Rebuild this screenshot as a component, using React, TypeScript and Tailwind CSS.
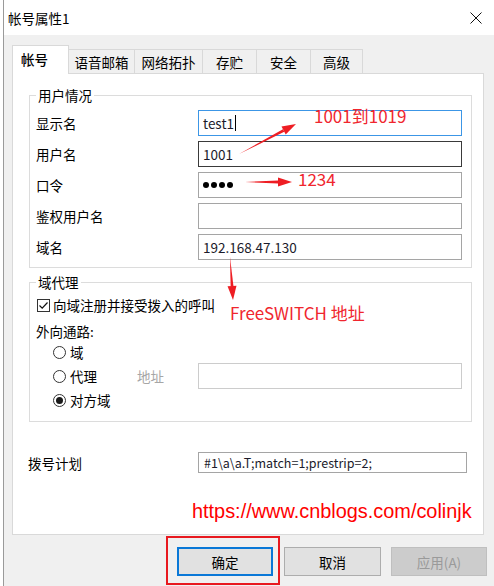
const inputClass = "h-[26px] border border-[#a5a5a5] bg-white pl-[4px] flex items-center text-[#1b1b2b]";

const tabs = [
  { label: "语音邮箱", w: "w-[66px]" },
  { label: "网络拓扑", w: "w-[68px]" },
  { label: "存贮", w: "w-[54px]" },
  { label: "安全", w: "w-[54px]" },
  { label: "高级", w: "w-[52px]" },
];

function Radio({ checked }: { checked?: boolean }) {
  return (
    <span className="flex h-[13px] w-[13px] items-center justify-center rounded-full border border-[#333] bg-white">
      {checked && <span className="h-[7px] w-[7px] rounded-full bg-[#1a1a1a]" />}
    </span>
  );
}

function Arrow({ x1, y1, x2, y2 }: { x1: number; y1: number; x2: number; y2: number }) {
  const dx = x2 - x1;
  const dy = y2 - y1;
  const len = Math.hypot(dx, dy);
  const ux = dx / len;
  const uy = dy / len;
  const bx = x2 - ux * 14;
  const by = y2 - uy * 14;
  const nx = -uy;
  const ny = ux;
  return (
    <g fill="#ee1d23" stroke="none">
      <polygon
        points={`${x1},${y1} ${bx + nx * 1.4},${by + ny * 1.4} ${bx - nx * 1.4},${by - ny * 1.4}`}
      />
      <polygon
        points={`${x2},${y2} ${bx + nx * 4.5},${by + ny * 4.5} ${bx - nx * 4.5},${by - ny * 4.5}`}
      />
    </g>
  );
}

export default function App() {
  return (
    <div className="relative flex h-[586px] w-[494px] overflow-hidden bg-[#f0f0f0] font-['Noto_Sans_CJK_SC','Noto_Sans',sans-serif] text-[13.5px] leading-[18px] text-black">
      <div className="w-[3px] shrink-0 bg-white" />
      <div className="flex flex-1 flex-col border-l border-[#9a9a9a]">
        {/* title bar */}
        <div className="flex h-[35px] items-center justify-between bg-white pl-[4px] pr-[12px]">
          <span>帐号属性1</span>
          <svg width="12" height="12" viewBox="0 0 12 12" stroke="#111" strokeWidth="1">
            <line x1="0.5" y1="0.5" x2="11.5" y2="11.5" />
            <line x1="11.5" y1="0.5" x2="0.5" y2="11.5" />
          </svg>
        </div>

        {/* tabs */}
        <div className="ml-[8px] mt-[10px] flex h-[28px] items-start">
          <div className="relative z-10 flex h-[29px] w-[57px] items-center border-x border-t border-[#d9d9d9] bg-white pl-[8px] pb-[2px] font-medium">
            帐号
          </div>
          {tabs.map((t) => (
            <div
              key={t.label}
              className={`mt-[4px] flex h-[24px] ${t.w} items-center justify-center border-r border-t border-[#d9d9d9] bg-[#f0f0f0]`}
            >
              {t.label}
            </div>
          ))}
        </div>

        {/* panel */}
        <div className="ml-[8px] flex h-[462px] w-[472px] flex-col border border-[#d9d9d9] bg-white">
          <fieldset className="ml-[16px] mt-[12px] w-[443px] border border-[#dcdcdc] pb-[7px] pl-[6px] pr-[9px]">
            <legend className="px-[2px]">用户情况</legend>
            <div className="mt-[6px] grid grid-cols-[162px_1fr] items-center gap-y-[5px]">
              <span>显示名</span>
              <div className={`${inputClass} !border-[#3c96e6]`}>
                test1<span className="ml-[1px] h-[16px] w-[1px] bg-black" />
              </div>
              <span>用户名</span>
              <div className={`${inputClass} !border-[#3a3a3a]`}>1001</div>
              <span>口令</span>
              <div className={`${inputClass} gap-[2px]`}>
                <span className="h-[6px] w-[6px] rounded-full bg-black" />
                <span className="h-[6px] w-[6px] rounded-full bg-black" />
                <span className="h-[6px] w-[6px] rounded-full bg-black" />
                <span className="h-[6px] w-[6px] rounded-full bg-black" />
              </div>
              <span>鉴权用户名</span>
              <div className={inputClass} />
              <span>域名</span>
              <div className={inputClass}>192.168.47.130</div>
            </div>
          </fieldset>

          <fieldset className="ml-[16px] mt-[5px] w-[443px] border border-[#dcdcdc] pb-[10px] pl-[6px] pr-[9px]">
            <legend className="px-[2px]">域代理</legend>
            <div className="mt-[5px] flex h-[18px] items-center gap-[3px] pl-[1px]">
              <span className="flex h-[13px] w-[13px] items-center justify-center border border-[#333] bg-white">
                <svg width="11" height="11" viewBox="0 0 11 11" fill="none" stroke="#111" strokeWidth="1.2">
                  <polyline points="1.5,5.5 4.2,8.2 9.5,2.5" />
                </svg>
              </span>
              <span>向域注册并接受拨入的呼叫</span>
            </div>
            <div className="mt-[8px] h-[18px]">外向通路:</div>
            <div className="mt-[1px] flex flex-col pl-[17px]">
              <div className="flex h-[22px] items-center gap-[4px]">
                <Radio />
                <span>域</span>
              </div>
              <div className="flex h-[26px] items-center">
                <div className="flex w-[145px] items-center gap-[4px]">
                  <Radio />
                  <span>代理</span>
                  <span className="ml-[36px] text-[#a6a6a6]">地址</span>
                </div>
                <div className="h-[26px] flex-1 border border-[#cccccc] bg-white" />
              </div>
              <div className="flex h-[22px] items-center gap-[4px]">
                <Radio checked />
                <span>对方域</span>
              </div>
            </div>
          </fieldset>

          <div className="ml-[15px] mt-[30px] flex h-[21px] items-center">
            <span className="w-[170px]">拨号计划</span>
            <div className="flex h-[21px] w-[269px] items-center border border-[#a5a5a5] pl-[5px] text-[12.5px] text-[#1b1b2b]">
              #1\a\a.T;match=1;prestrip=2;
            </div>
          </div>

          <div className="ml-[179px] mt-[26px] font-['Liberation_Sans',sans-serif] text-[19.9px] leading-[24px] text-[#ff0000]">
            https://www.cnblogs.com/colinjk
          </div>
        </div>

        {/* buttons */}
        <div className="mt-[12px] flex justify-end pr-[7px]">
          <button className="h-[29px] w-[96px] border-2 border-[#0a78d7] bg-[#e1e1e1]">确定</button>
          <button className="ml-[11px] h-[29px] w-[97px] border border-[#adadad] bg-[#e1e1e1]">取消</button>
          <button className="ml-[10px] h-[29px] w-[96px] border border-[#bfbfbf] bg-[#cccccc] text-[#9a9a9a]">
            应用(A)
          </button>
        </div>
      </div>

      {/* annotations */}
      <svg className="pointer-events-none absolute left-0 top-0" width="494" height="586">
        <Arrow x1={239} y1={154} x2={296} y2={124} />
        <Arrow x1={245} y1={182} x2={292} y2={182} />
        <Arrow x1={230} y1={257} x2={233} y2={300} />
      </svg>
      <span className="absolute left-[314px] top-[106px] text-[17px] leading-[20px] text-[#f0262e]">1001到1019</span>
      <span className="absolute left-[298px] top-[169px] text-[17px] leading-[20px] text-[#f0262e]">1234</span>
      <span className="absolute left-[230px] top-[303px] text-[17px] leading-[20px] text-[#f0262e]">FreeSWITCH 地址</span>
      <div className="absolute left-[166px] top-[536px] h-[49px] w-[114px] border-2 border-[#e8191f]" />
    </div>
  );
}
